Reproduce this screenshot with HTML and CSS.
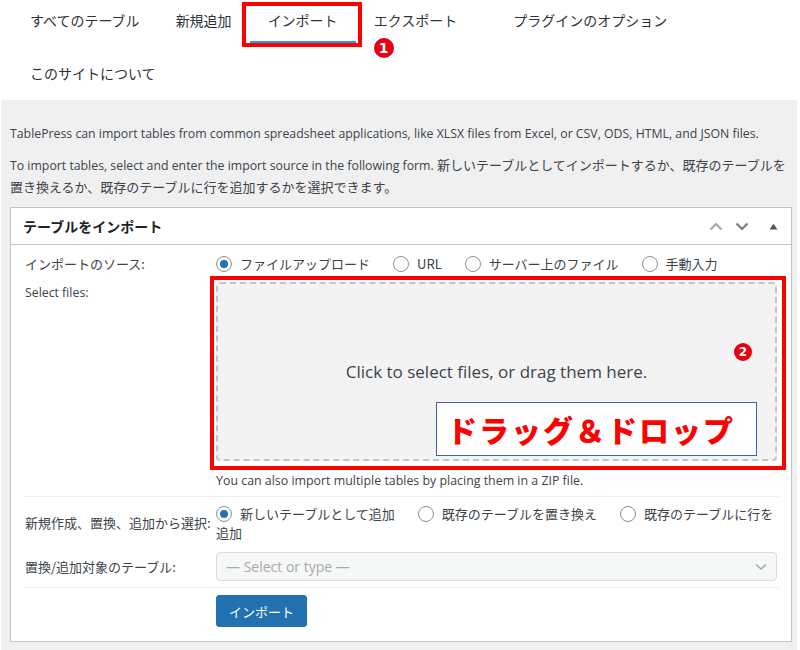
FILE: index.html
```html
<!DOCTYPE html>
<html lang="ja">
<head>
<meta charset="utf-8">
<title>TablePress インポート</title>
<link rel="stylesheet" href="styles.css">
</head>
<body>
<nav class="tabs">
  <a class="tab">すべてのテーブル</a>
  <a class="tab">新規追加</a>
  <a class="tab active">インポート<span class="mark-frame"></span><span class="badge badge-1">1</span></a>
  <a class="tab">エクスポート</a>
  <a class="tab tab-spaced">プラグインのオプション</a>
  <a class="tab">このサイトについて</a>
</nav>
<main class="page">
  <p class="intro intro-first en">TablePress can import tables from common spreadsheet applications, like XLSX files from Excel, or CSV, ODS, HTML, and JSON files.</p>
  <p class="intro"><span class="en">To import tables, select and enter the import source in the following form. </span>新しいテーブルとしてインポートするか、既存のテーブルを置き換えるか、既存のテーブルに行を追加するかを選択できます。</p>

  <section class="postbox">
    <header class="postbox-head">
      <h2 class="postbox-title">テーブルをインポート</h2>
      <div class="handles">
        <span class="handle">
          <svg width="14" height="9" viewBox="0 0 14 9"><path d="M1.5 7.5 L7 2 L12.5 7.5" fill="none" stroke="#a7aaad" stroke-width="2.2"/></svg>
        </span>
        <span class="handle">
          <svg width="14" height="9" viewBox="0 0 14 9"><path d="M1.5 1.5 L7 7 L12.5 1.5" fill="none" stroke="#787c82" stroke-width="2.2"/></svg>
        </span>
        <span class="handle handle-toggle">
          <svg width="9" height="7" viewBox="0 0 9 7"><path d="M0.5 6.5 L4.5 0.8 L8.5 6.5 Z" fill="#50575e"/></svg>
        </span>
      </div>
    </header>
    <div class="postbox-body">
      <div class="row row-source">
        <div class="label">インポートのソース:</div>
        <div class="field">
          <label class="opt"><span class="radio checked"></span>ファイルアップロード</label><label class="opt"><span class="radio"></span>URL</label><label class="opt"><span class="radio"></span>サーバー上のファイル</label><label class="opt"><span class="radio"></span>手動入力</label>
        </div>
      </div>
      <div class="row row-files">
        <div class="label label-top en">Select files:</div>
        <div class="field">
          <div class="dropzone">
            <span class="drop-text en">Click to select files, or drag them here.</span>
            <span class="mark-frame mark-frame-drop"></span>
            <span class="badge badge-2">2</span>
            <span class="dd-note">ドラッグ＆ドロップ</span>
          </div>
          <div class="hint en">You can also import multiple tables by placing them in a ZIP file.</div>
        </div>
      </div>
      <div class="row row-type">
        <div class="label">新規作成、置換、追加から選択:</div>
        <div class="field field-wrap">
          <label class="opt"><span class="radio checked"></span>新しいテーブルとして追加</label><label class="opt"><span class="radio"></span>既存のテーブルを置き換え</label><label class="opt"><span class="radio"></span>既存のテーブルに行を追加</label>
        </div>
      </div>
      <div class="row row-target">
        <div class="label">置換/追加対象のテーブル:</div>
        <div class="field">
          <div class="select">
            <span class="placeholder en">— Select or type —</span>
            <svg width="12" height="8" viewBox="0 0 12 8"><path d="M1 1.5 L6 6 L11 1.5" fill="none" stroke="#a7aaad" stroke-width="1.6"/></svg>
          </div>
        </div>
      </div>
      <div class="row row-submit">
        <div class="label"></div>
        <div class="field">
          <button class="button-primary" type="button">インポート</button>
        </div>
      </div>
    </div>
  </section>
</main>
</body>
</html>
```

FILE: styles.css
```css
* { box-sizing: border-box; }

html, body {
  margin: 0;
  padding: 0;
  background: #ffffff;
  font-family: "Noto Sans CJK JP", sans-serif;
  color: #3c434a;
  font-size: 13px;
}

.en {
  font-family: "Open Sans", "Noto Sans CJK JP", sans-serif;
  font-size: 12.3px;
}

/* ---------- tabs ---------- */
.tabs {
  display: flex;
  flex-wrap: wrap;
  row-gap: 9px;
  padding: 0 0 3px 12px;
  width: 800px;
}

.tab {
  position: relative;
  display: block;
  height: 44px;
  padding: 0 18px;
  line-height: 41px;
  font-size: 14px;
  color: #2c3338;
  border-bottom: 3px solid transparent;
  white-space: nowrap;
}

.tab.active {
  border-bottom-color: #1ea0d6;
}

.tab-spaced {
  margin-left: 20px;
}

/* annotation overlays */
.mark-frame {
  position: absolute;
  left: -8px;
  right: -6px;
  top: 2px;
  bottom: -6px;
  border: 4px solid #ff0000;
  pointer-events: none;
}

.badge {
  position: absolute;
  width: 20px;
  height: 20px;
  border-radius: 50%;
  background: #e60012;
  color: #ffffff;
  font-family: "DejaVu Sans", sans-serif;
  font-weight: bold;
  font-size: 14px;
  line-height: 20px;
  text-align: center;
}

.badge-1 {
  left: 124px;
  top: 38px;
}

/* ---------- page ---------- */
.page {
  margin: 0 3px 0 1px;
  background: #f0f0f1;
  padding: 23px 5px 8px 9px;
}

.intro {
  margin: 0 0 10px;
  line-height: 21px;
  color: #3c434a;
}

/* ---------- postbox ---------- */
.postbox {
  background: #ffffff;
  border: 1px solid #c3c4c7;
}

.postbox-head {
  display: flex;
  align-items: center;
  justify-content: space-between;
  height: 37px;
  border-bottom: 1px solid #c3c4c7;
  padding-left: 12px;
}

.postbox-title {
  margin: 0;
  font-size: 14px;
  font-weight: 600;
  color: #1d2327;
}

.handles {
  display: flex;
  align-items: center;
  height: 100%;
}

.handle {
  display: flex;
  align-items: center;
  justify-content: center;
  width: 26px;
  height: 100%;
}

.handle-toggle {
  width: 36px;
}

.postbox-body {
  padding: 0 12px 14px;
}

.row {
  display: grid;
  grid-template-columns: 193px 1fr;
}

.label {
  padding-left: 2px;
  line-height: 20px;
  color: #3c434a;
  align-self: center;
  white-space: nowrap;
}

.label-top {
  align-self: start;
  padding-top: 1px;
}

.field {
  line-height: 20px;
}

.opt {
  margin-right: 23px;
  color: #3c434a;
}

.radio {
  display: inline-block;
  width: 16px;
  height: 16px;
  border: 1px solid #8c8f94;
  border-radius: 50%;
  vertical-align: -3px;
  margin-right: 8px;
  background: #ffffff;
}

.radio.checked::before {
  content: "";
  display: block;
  width: 8px;
  height: 8px;
  margin: 3px;
  border-radius: 50%;
  background: #2271b1;
}

.row-source {
  padding: 9px 0 4px;
}

.row-files {
  padding: 4px 0 5px;
  border-bottom: 1px solid #f0f0f1;
}

.dropzone {
  position: relative;
  display: flex;
  align-items: center;
  justify-content: center;
  height: 179px;
  width: 561px;
  border: 2px dashed #c3c4c7;
  border-radius: 4px;
  background: #f3f3f3;
}

.drop-text {
  font-size: 17px;
  color: #3c434a;
}

.mark-frame-drop {
  left: -8px;
  top: -8px;
  right: -11px;
  bottom: -11px;
}

.badge-2 {
  left: 516px;
  top: 59px;
  width: 18px;
  height: 18px;
  line-height: 18px;
  font-size: 12px;
}

.dd-note {
  position: absolute;
  left: 218px;
  top: 118px;
  width: 321px;
  height: 54px;
  border: 1px solid #3a66a8;
  background: #ffffff;
  color: #ff0000;
  font-weight: 900;
  font-size: 30px;
  letter-spacing: 2px;
  line-height: 52px;
  padding-left: 10px;
  white-space: nowrap;
}

.hint {
  margin-top: 10px;
  font-size: 12.4px;
  color: #3c434a;
}

.row-type {
  padding-top: 7px;
}

.field-wrap {
  line-height: 19px;
}

.row-target {
  padding: 10px 0 6px;
  border-bottom: 1px solid #f0f0f1;
}

.select {
  display: flex;
  align-items: center;
  justify-content: space-between;
  width: 561px;
  height: 29px;
  padding: 0 9px 0 9px;
  border: 1px solid #dcdcde;
  border-radius: 4px;
  background: #f6f7f7;
}

.placeholder {
  font-size: 14px;
  color: #a7aaad;
}

.row-submit {
  padding-top: 7px;
}

.button-primary {
  width: 91px;
  height: 32px;
  border: 1px solid #2271b1;
  border-radius: 3px;
  background: #2271b1;
  color: #ffffff;
  font-family: "Noto Sans CJK JP", sans-serif;
  font-size: 13px;
  padding: 0;
}
```
